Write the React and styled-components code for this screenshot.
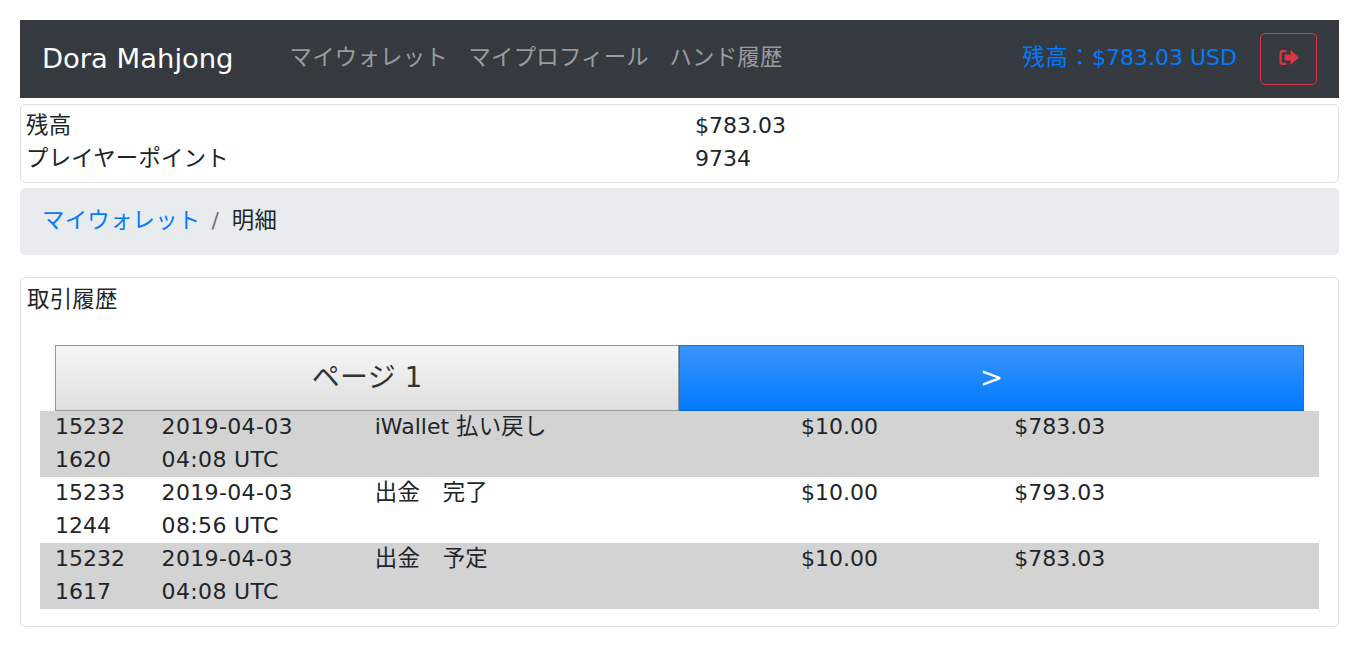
import React from "react";
import styled, { createGlobalStyle } from "styled-components";

const GlobalStyle = createGlobalStyle`
  html, body {
    margin: 0;
    background: #fff;
  }
  body {
    padding: 20px;
    font-family: "DejaVu Sans", "Noto Sans CJK JP", sans-serif;
    font-size: 22px;
    line-height: 33px;
    color: #212529;
  }
  * {
    box-sizing: border-box;
  }
`;

// japanese text runs a little wider than the latin around it
const Ja = styled.span`
  font-size: 1.018em;
  line-height: 1;
  letter-spacing: 0.25px;
`;

const Navbar = styled.nav`
  display: flex;
  align-items: center;
  height: 78px;
  padding: 0 22px;
  background: #343a40;
`;

const Brand = styled.a`
  font-size: 27.4px;
  color: #fff;
  margin: 0 56px 2px 0;
`;

const NavLinks = styled.div`
  display: flex;
  gap: 20.5px;
  flex: 1;
  margin-bottom: 4px;
`;

const NavLink = styled.a`
  color: rgba(255, 255, 255, 0.5);
`;

const Balance = styled.span`
  color: #007bff;
  margin: 0 23px 4px 0;
`;

const BalanceLabel = styled(Ja)`
  letter-spacing: 0.9px;
`;

const LogoutButton = styled.button`
  display: flex;
  align-items: center;
  justify-content: center;
  width: 57px;
  height: 52px;
  padding: 0 0 4px;
  background: transparent;
  border: 1px solid #dc3545;
  border-radius: 5px;
  color: #dc3545;
`;

const SummaryCard = styled.div`
  display: grid;
  grid-template-columns: 669px 1fr;
  margin-top: 6px;
  padding: 4px 5px 7px;
  border: 1px solid #dfdfdf;
  border-radius: 5px;
`;

const Breadcrumb = styled.div`
  display: flex;
  margin: 5px 0 22px;
  padding: 16px 22px 18px;
  background: #e9ecef;
  border-radius: 5px;
`;

const Crumb = styled.a`
  color: #007bff;
`;

const Divider = styled.span`
  padding: 0 13px 0 11px;
  color: #6c757d;
`;

const HistoryCard = styled.section`
  padding: 5px 19px 17px;
  border: 1px solid #dfdfdf;
  border-radius: 5px;
`;

const CardTitle = styled.div`
  margin-left: -13px;
`;

const Pager = styled.div`
  display: grid;
  grid-template-columns: 624px 1fr;
  margin: 29px 15px 0;
  height: 66px;
`;

const PageLabel = styled.div`
  display: flex;
  align-items: center;
  justify-content: center;
  padding-bottom: 2px;
  font-size: 27.5px;
  color: #333;
  background: linear-gradient(#f6f6f6, #dfdfdf);
  border: 1px solid #979797;
`;

const NextButton = styled.button`
  padding: 0 0 2px;
  font: inherit;
  font-size: 27.5px;
  color: #fff;
  background: linear-gradient(#3a94ff, #007bff);
  border: 1px solid #2a6fc4;
  border-bottom-color: #0067d6;
`;

const Row = styled.div`
  display: grid;
  grid-template-columns: repeat(12, 1fr);
  padding-bottom: 1px;
  background: ${(props) => (props.$shaded ? "#d3d3d3" : "#fff")};
`;

const Cell = styled.div`
  grid-column: span ${(props) => props.$span};
  margin-top: -1px;
  padding: 0 15px;
`;

const DateCell = styled(Cell)`
  letter-spacing: 0.35px;
`;

const rows = [
  { id: ["15232", "1620"], date: "2019-04-03", time: "04:08 UTC", text: "払い戻し", prefix: "iWallet ", amount: "$10.00", balance: "$783.03" },
  { id: ["15233", "1244"], date: "2019-04-03", time: "08:56 UTC", text: "出金　完了", prefix: "", amount: "$10.00", balance: "$793.03" },
  { id: ["15232", "1617"], date: "2019-04-03", time: "04:08 UTC", text: "出金　予定", prefix: "", amount: "$10.00", balance: "$783.03" },
];

function SignOutIcon() {
  return (
    <svg width="20" height="17" viewBox="0 0 20 17" fill="currentColor">
      <path d="M7.500 1H3.500A3 3 0 0 0 .5 4v9a3 3 0 0 0 3 3h4v-2.200H4A1.300 1.300 0 0 1 2.700 12.500v-8A1.300 1.300 0 0 1 4 3.200h3.500z" />
      <path d="M11.500 1 20 8.500 11.500 16v-4.500H5.500v-6h6z" />
    </svg>
  );
}

export default function App() {
  return (
    <>
      <GlobalStyle />
      <Navbar>
        <Brand>Dora Mahjong</Brand>
        <NavLinks>
          <NavLink><Ja>マイウォレット</Ja></NavLink>
          <NavLink><Ja>マイプロフィール</Ja></NavLink>
          <NavLink><Ja>ハンド履歴</Ja></NavLink>
        </NavLinks>
        <Balance><BalanceLabel>残高：</BalanceLabel>$783.03 USD</Balance>
        <LogoutButton aria-label="logout">
          <SignOutIcon />
        </LogoutButton>
      </Navbar>

      <SummaryCard>
        <div><Ja>残高</Ja></div>
        <div>$783.03</div>
        <div><Ja>プレイヤーポイント</Ja></div>
        <div>9734</div>
      </SummaryCard>

      <Breadcrumb>
        <Crumb><Ja>マイウォレット</Ja></Crumb>
        <Divider>/</Divider>
        <span><Ja>明細</Ja></span>
      </Breadcrumb>

      <HistoryCard>
        <CardTitle><Ja>取引履歴</Ja></CardTitle>
        <Pager>
          <PageLabel><span><Ja>ページ</Ja> 1</span></PageLabel>
          <NextButton>&gt;</NextButton>
        </Pager>
        {rows.map((row, i) => (
          <Row key={row.id.join("-")} $shaded={i % 2 === 0}>
            <Cell $span={1}>
              {row.id[0]}
              <br />
              {row.id[1]}
            </Cell>
            <DateCell $span={2}>
              {row.date}
              <br />
              {row.time}
            </DateCell>
            <Cell $span={4}>{row.prefix}<Ja>{row.text}</Ja></Cell>
            <Cell $span={2}>{row.amount}</Cell>
            <Cell $span={2}>{row.balance}</Cell>
          </Row>
        ))}
      </HistoryCard>
    </>
  );
}
